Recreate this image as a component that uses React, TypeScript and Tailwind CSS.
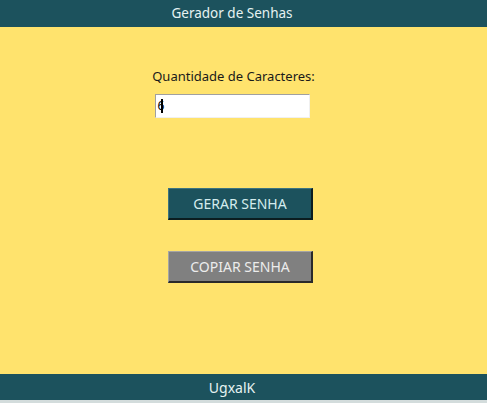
import React from 'react';

const App: React.FC = () => {
  return (
    <div className="flex h-[403px] w-[487px] flex-col bg-[#ffe36d] font-['Noto_Sans',sans-serif]">
      <header className="flex h-[27px] items-center justify-center bg-[#1c525d] pr-[23px] text-[13.5px] text-[#e6f2f2]">
        Gerador de Senhas
      </header>
      <main className="flex flex-1 flex-col items-center pt-[41px] pr-[23px]">
        <label className="ml-[3px] text-[13px] leading-[17px] text-[#1a1a1a]">Quantidade de Caracteres:</label>
        <div className="mt-[9px] flex h-[24px] w-[155px] items-center border-t border-l border-t-[#a0a0a0] border-l-[#a0a0a0] border-r border-b border-r-[#f0f0f0] border-b-[#f0f0f0] bg-white pl-[2px] text-[12px] text-black">
          <span className="leading-none">6</span>
          <span className="-ml-[3px] h-[14px] w-[2px] bg-black" />
        </div>
        <button className="mt-[70px] ml-[17px] h-[32px] w-[145px] border-t border-l border-t-[#3d7480] border-l-[#3d7480] border-r-2 border-b-2 border-r-[#0b1d20] border-b-[#0b1d20] bg-[#1c525d] text-[14px] text-[#d4ecee]">
          GERAR SENHA
        </button>
        <button className="mt-[31px] ml-[17px] h-[32px] w-[145px] border-t border-l border-t-[#a5a5a5] border-l-[#a5a5a5] border-r-2 border-b-2 border-r-[#2a2a2a] border-b-[#2a2a2a] bg-[#808080] text-[14px] text-[#ececec]">
          COPIAR SENHA
        </button>
      </main>
      <footer className="flex h-[26px] items-center justify-center bg-[#1c525d] pr-[23px] text-[14px] text-[#e6f2f2]">
        UgxalK
      </footer>
      <div className="h-[3px] bg-[#d3dcdc]" />
    </div>
  );
};

export default App;
